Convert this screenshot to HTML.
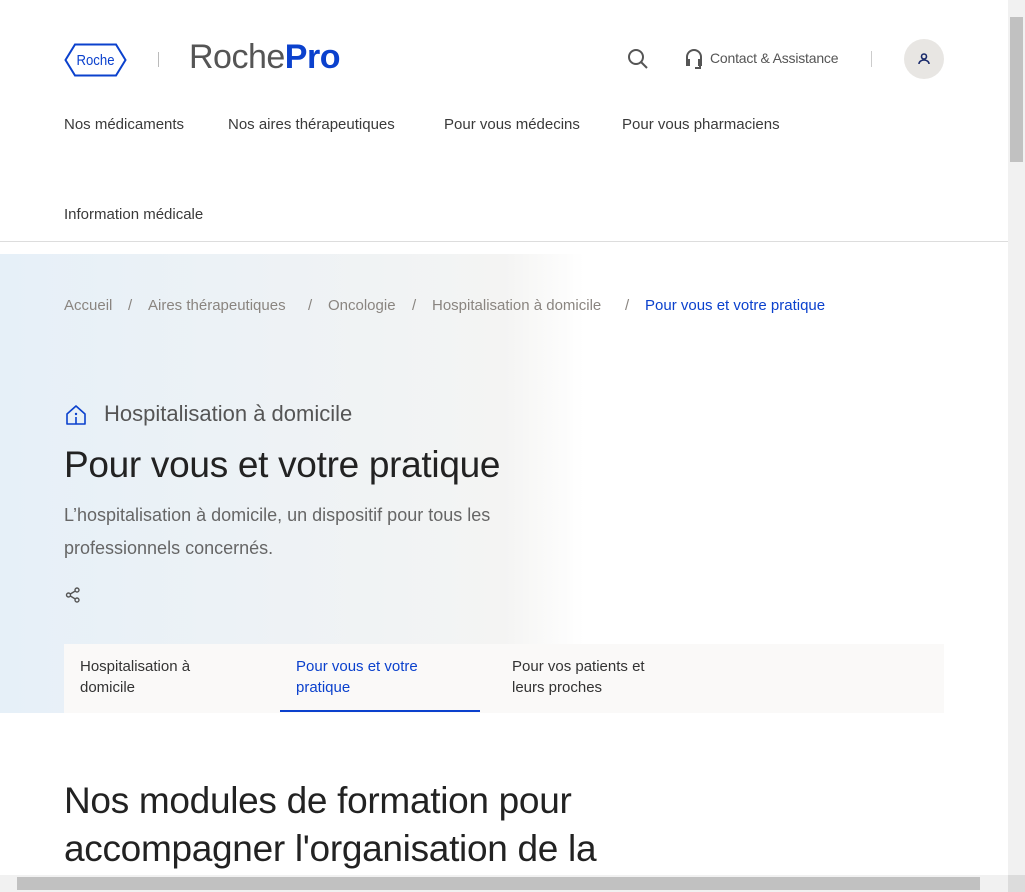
<!DOCTYPE html>
<html><head><meta charset="utf-8"><style>
*{margin:0;padding:0;box-sizing:border-box}
body{width:1025px;height:892px;overflow:hidden;font-family:"Liberation Sans",sans-serif;background:#fff;position:relative;color:#333}
.a{position:absolute;white-space:nowrap}
.nav{font-size:15px;color:#3a3a3a}
.bc{font-size:15px;color:#8a8580}
</style></head><body>
<svg class="a" style="left:64px;top:43px" width="63" height="34" viewBox="0 0 63 34"><polygon points="11,1.5 52,1.5 61.5,17 52,32.5 11,32.5 1.5,17" fill="none" stroke="#0b41cd" stroke-width="2"/><text x="31.5" y="22" text-anchor="middle" font-family="Liberation Sans Narrow,Liberation Sans" font-size="15" fill="#0b41cd" textLength="38" lengthAdjust="spacingAndGlyphs">Roche</text></svg>
<div class="a" style="left:158px;top:52px;width:1px;height:15px;background:#bbb"></div>
<div class="a" style="left:189px;top:38px;font-size:34px;color:#555;letter-spacing:-0.5px">Roche<b style="color:#0b41cd">Pro</b></div>
<svg class="a" style="left:627px;top:48px" width="22" height="22" viewBox="0 0 22 22"><circle cx="9" cy="9" r="7" fill="none" stroke="#555" stroke-width="2"/><line x1="14" y1="14" x2="20" y2="20" stroke="#555" stroke-width="2"/></svg>
<svg class="a" style="left:684px;top:48px" width="20" height="22" viewBox="0 0 20 22"><path d="M3 12V9a7 7 0 0 1 14 0v3" fill="none" stroke="#555" stroke-width="2"/><rect x="2" y="11" width="4" height="7" fill="#555"/><rect x="14" y="11" width="4" height="7" fill="#555"/><path d="M16 18v2h-5" fill="none" stroke="#555" stroke-width="2"/></svg>
<div class="a" style="left:710px;top:50px;font-size:14px;color:#555;letter-spacing:-0.2px">Contact &amp; Assistance</div>
<div class="a" style="left:871px;top:51px;width:1px;height:16px;background:#ccc"></div>
<div class="a" style="left:904px;top:39px;width:40px;height:40px;border-radius:50%;background:#e8e6e3"></div>
<svg class="a" style="left:917px;top:52px" width="14" height="14" viewBox="0 0 14 14"><circle cx="7" cy="4.5" r="2.5" fill="none" stroke="#1a2b6b" stroke-width="1.6"/><path d="M2 12a5 4 0 0 1 10 0" fill="none" stroke="#1a2b6b" stroke-width="1.6"/></svg>
<div class="a nav" style="left:64px;top:116px">Nos médicaments</div>
<div class="a nav" style="left:228px;top:116px">Nos aires thérapeutiques</div>
<div class="a nav" style="left:444px;top:116px">Pour vous médecins</div>
<div class="a nav" style="left:622px;top:116px">Pour vous pharmaciens</div>
<div class="a nav" style="left:64px;top:206px">Information médicale</div>
<div class="a" style="left:0;top:241px;width:1008px;height:1px;background:#ddd"></div>
<div class="a" style="left:0;top:254px;width:1008px;height:459px;background:linear-gradient(90deg,#e6f0f8 0%,#f4f4f3 50%,#fff 58%)"></div>
<div class="a bc" style="left:64px;top:297px">Accueil</div>
<div class="a bc" style="left:128px;top:297px">/</div>
<div class="a bc" style="left:148px;top:297px">Aires thérapeutiques</div>
<div class="a bc" style="left:308px;top:297px">/</div>
<div class="a bc" style="left:328px;top:297px">Oncologie</div>
<div class="a bc" style="left:412px;top:297px">/</div>
<div class="a bc" style="left:432px;top:297px">Hospitalisation à domicile</div>
<div class="a bc" style="left:625px;top:297px">/</div>
<div class="a bc" style="left:645px;top:297px;color:#0b41cd">Pour vous et votre pratique</div>
<svg class="a" style="left:65px;top:404px" width="22" height="22" viewBox="0 0 22 22"><path d="M2 10L11 2l9 8v10H2z" fill="none" stroke="#0b41cd" stroke-width="1.6" stroke-linejoin="round"/><circle cx="11" cy="10" r="1.2" fill="#0b41cd"/><line x1="11" y1="13" x2="11" y2="20" stroke="#0b41cd" stroke-width="1.6"/></svg>
<div class="a" style="left:104px;top:401px;font-size:22px;color:#555">Hospitalisation à domicile</div>
<div class="a" style="left:64px;top:444px;font-size:37px;color:#222;letter-spacing:-0.3px">Pour vous et votre pratique</div>
<div class="a" style="left:64px;top:499px;font-size:18px;color:#666;line-height:33px;white-space:normal;width:480px">L’hospitalisation à domicile, un dispositif pour tous les professionnels concernés.</div>
<svg class="a" style="left:65px;top:587px" width="16" height="16" viewBox="0 0 16 16"><circle cx="12" cy="3" r="2" fill="none" stroke="#555" stroke-width="1.4"/><circle cx="3.5" cy="8" r="2" fill="none" stroke="#555" stroke-width="1.4"/><circle cx="12" cy="13" r="2" fill="none" stroke="#555" stroke-width="1.4"/><path d="M5.3 7l5-3M5.3 9l5 3" stroke="#555" stroke-width="1.4"/></svg>
<div class="a" style="left:64px;top:644px;width:880px;height:69px;background:#faf9f8"></div>
<div class="a" style="left:80px;top:656px;font-size:15px;line-height:21px;color:#333">Hospitalisation à<br>domicile</div>
<div class="a" style="left:296px;top:656px;font-size:15px;line-height:21px;color:#0b41cd">Pour vous et votre<br>pratique</div>
<div class="a" style="left:280px;top:710px;width:200px;height:2px;background:#0b41cd"></div>
<div class="a" style="left:512px;top:656px;font-size:15px;line-height:21px;color:#333">Pour vos patients et<br>leurs proches</div>
<div class="a" style="left:64px;top:777px;font-size:37px;line-height:48px;color:#222;letter-spacing:-0.3px">Nos modules de formation pour<br>accompagner l'organisation de la</div>
<div class="a" style="left:1008px;top:0;width:17px;height:892px;background:#f1f1f1"></div>
<div class="a" style="left:1010px;top:17px;width:13px;height:145px;background:#c1c1c1"></div>
<div class="a" style="left:0;top:875px;width:1008px;height:17px;background:#f1f1f1"></div>
<div class="a" style="left:17px;top:877px;width:963px;height:13px;background:#c1c1c1"></div>
<div class="a" style="left:1008px;top:875px;width:17px;height:17px;background:#dcdcdc"></div>
</body></html>
